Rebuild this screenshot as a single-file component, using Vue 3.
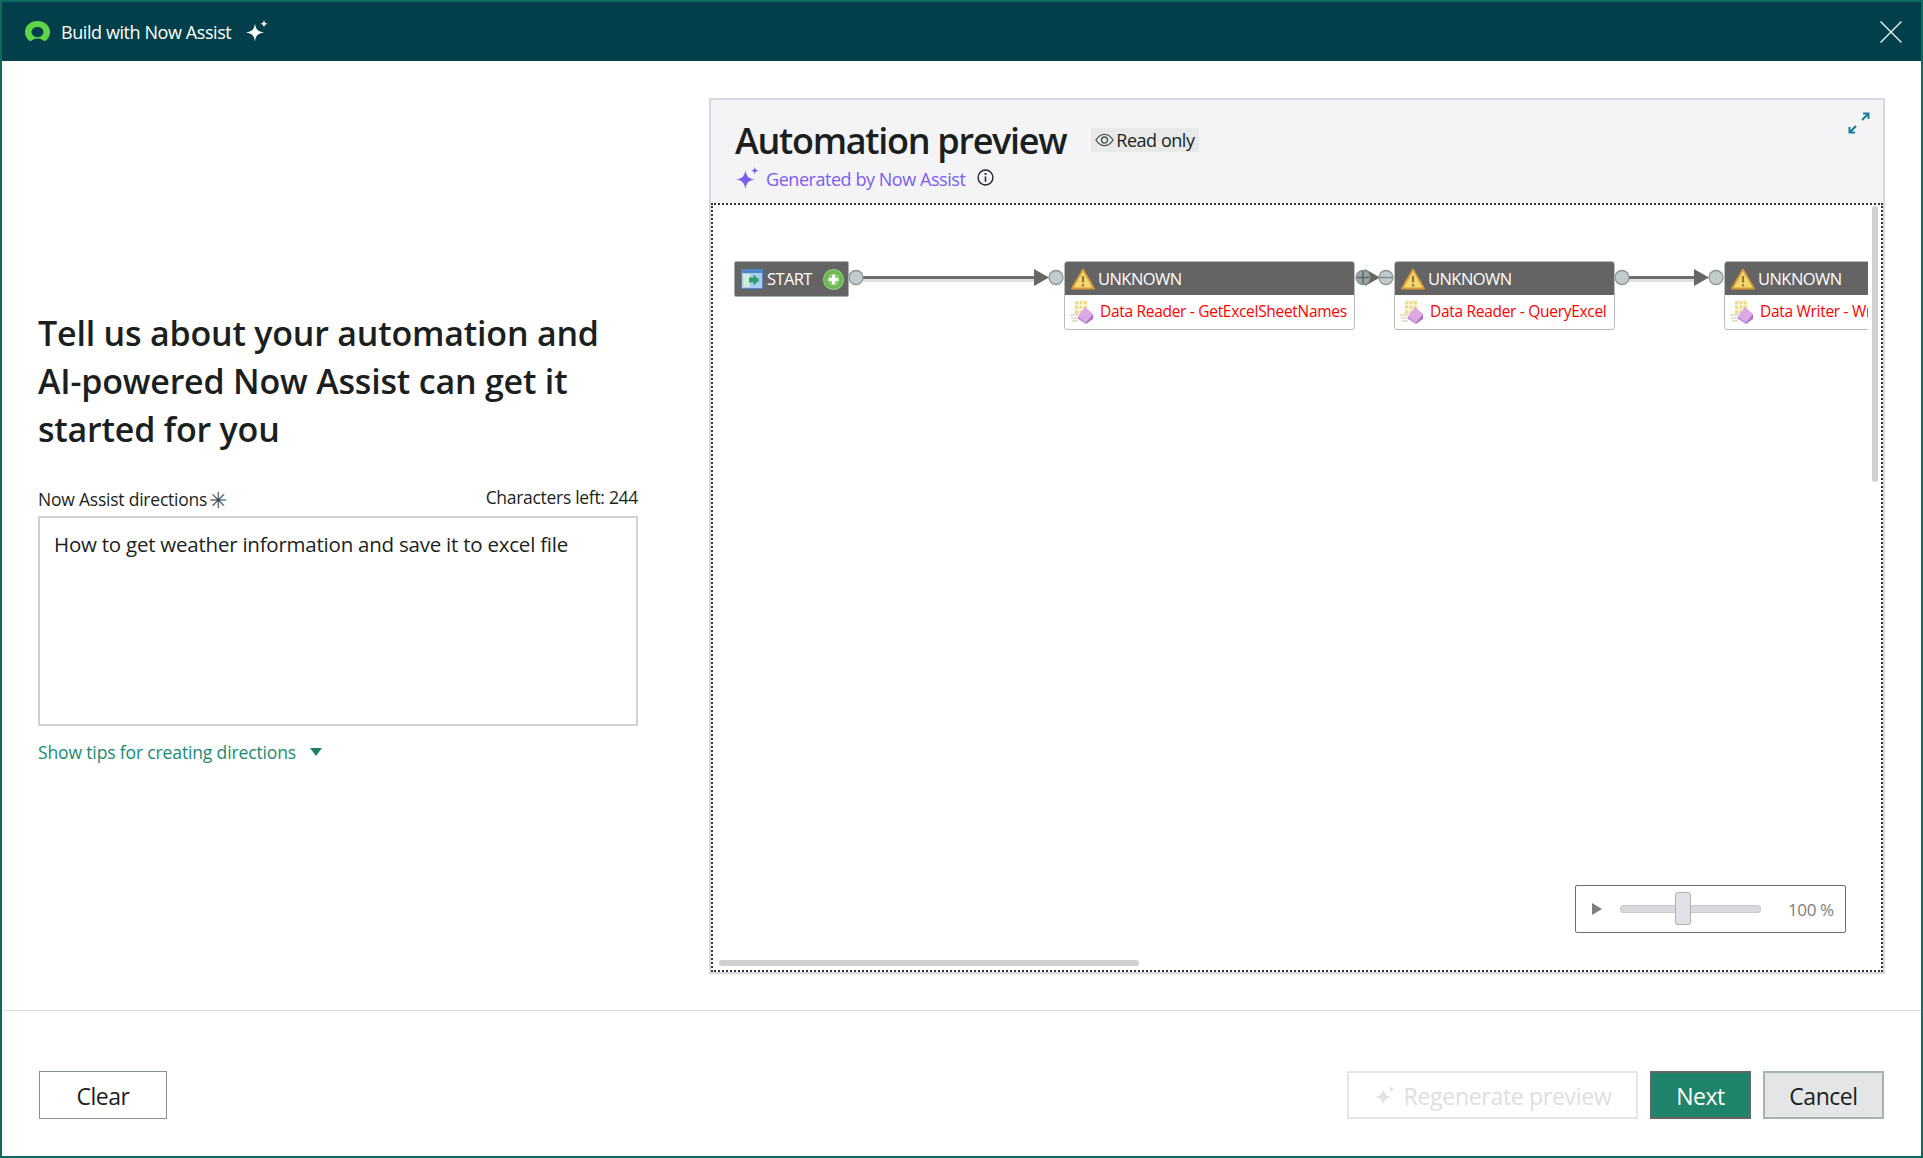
<template>
  <div class="window">
    <header class="titlebar">
      <svg class="logo" viewBox="0 0 25 21" width="25" height="21">
        <path fill="#5fd64a" fill-rule="evenodd" d="M12.500 0C19.500 0 25 4.800 25 11c0 3.200-1.300 6-3.400 8-1.100 1.100-2.500 1.200-3.700.3-1.500-1.100-3.300-1.700-5.400-1.700s-3.900.6-5.400 1.700c-1.200.9-2.600.8-3.700-.3C1.300 17 0 14.200 0 11 0 4.800 5.500 0 12.500 0zM12.500 6C9.100 6 6.500 8.100 6.500 11s2.600 5 6 5 6-2.100 6-5-2.600-5-6-5z" />
      </svg>
      <span class="app-title">Build with Now Assist</span>
      <svg class="spark" viewBox="0 0 24 24" width="24" height="24">
        <path fill="#fff" d="M10 3.500c1 6.200 2.800 8 9 9-6.200 1-8 2.800-9 9-1-6.200-2.800-8-9-9 6.200-1 8-2.800 9-9z" />
        <path fill="#fff" d="M19 0c.4 2.500 1.300 3.400 4 3.800-2.700.4-3.600 1.300-4 3.800-.4-2.500-1.300-3.400-4-3.800 2.700-.4 3.600-1.300 4-3.800z" />
      </svg>
      <svg class="close" viewBox="0 0 22 22" width="22" height="22">
        <path d="M.5.500l21 21M21.500.5l-21 21" stroke="#dfe8e8" stroke-width="1.500" fill="none" />
      </svg>
    </header>

    <main class="content">
      <section class="intro">
        <h1>Tell us about your automation and<br />AI-powered Now Assist can get it<br />started for you</h1>
        <div class="field-head">
          <label class="field-label">Now Assist directions<span class="req">✳</span></label>
          <span class="count">Characters left: 244</span>
        </div>
        <div class="textarea">How to get weather information and save it to excel file</div>
        <a class="tips">Show tips for creating directions<i class="caret"></i></a>
      </section>

      <section class="preview">
        <div class="preview-head">
          <div class="head-row">
            <h2>Automation preview</h2>
            <span class="chip">
              <svg viewBox="0 0 20 14" width="19" height="14">
                <path d="M1 7c2.500-4 5.500-6 9-6s6.500 2 9 6c-2.500 4-5.500 6-9 6s-6.500-2-9-6z" fill="none" stroke="#4b5452" stroke-width="1.400" />
                <circle cx="10" cy="7" r="3.200" fill="none" stroke="#4b5452" stroke-width="1.400" />
              </svg>
              Read only
            </span>
          </div>
          <div class="generated">
            <svg viewBox="0 0 24 24" width="25" height="25">
              <path fill="#7a5cf0" d="M10 4c1 6 3 8 9 9-6 1-8 3-9 9-1-6-3-8-9-9 6-1 8-3 9-9z" />
              <path fill="#7a5cf0" d="M19 1c.4 2.300 1.200 3.100 3.500 3.500-2.300.4-3.100 1.200-3.500 3.500-.4-2.300-1.200-3.100-3.500-3.500 2.300-.4 3.100-1.200 3.500-3.500z" />
            </svg>
            <span class="gen-text">Generated by Now Assist</span>
            <svg class="info" viewBox="0 0 16 16" width="17" height="17">
              <circle cx="8" cy="8" r="7" fill="none" stroke="#1f282a" stroke-width="1.300" />
              <path d="M8 7v5" stroke="#1f282a" stroke-width="1.500" />
              <circle cx="8" cy="4.600" r="1" fill="#1f282a" />
            </svg>
          </div>
          <svg class="expand" viewBox="0 0 24 24" width="24" height="24">
            <path d="M15 9l6-6M16 2.500h5.500V8M9 15l-6 6M2.500 16v5.500H8" fill="none" stroke="#12809a" stroke-width="2" />
          </svg>
        </div>

        <div class="canvas">
          <div class="viewport">
            <div class="diagram">
              <svg class="wires" width="1155" height="100" viewBox="0 0 1155 100">
                <g v-for="w in wires" :key="w.from">
                  <line :x1="w.from" y1="74" :x2="w.to - 12" y2="74" stroke="#000" stroke-opacity="0.12" stroke-width="6" />
                  <line :x1="w.from" y1="72.500" :x2="w.to - 12" y2="72.500" stroke="#6e6e6e" stroke-width="3" />
                  <polygon :points="`${w.to - 15},64 ${w.to},72.500 ${w.to - 15},81`" fill="#666" />
                </g>
                <circle v-for="p in ports" :key="p" :cx="p" cy="72.500" r="7" :fill="p === 650 ? '#9aa5a5' : '#c3cccc'" stroke="#8a9494" stroke-width="1.300" />
                <line x1="644" y1="72.500" x2="656" y2="72.500" stroke="#5f6868" stroke-width="1.500" />
                <line x1="650" y1="66" x2="650" y2="79" stroke="#5f6868" stroke-width="1.500" />
                <line x1="667" y1="72.500" x2="679" y2="72.500" stroke="#7f8a8a" stroke-width="1.500" />
              </svg>

              <div class="start-node">
                <svg viewBox="0 0 22 20" width="22" height="20">
                  <rect x=".5" y=".5" width="21" height="19" fill="#a9cdf0" stroke="#4f86c6" />
                  <rect x="1" y="1" width="20" height="3" fill="#4f86c6" />
                  <rect x="2.500" y="5" width="6.500" height="13" fill="#d3ecd6" />
                  <path d="M8 8.500h4.500V5.500l6 5.500-6 5.500v-3H8z" fill="#2f9e6e" />
                </svg>
                <span>START</span>
                <svg class="plus" viewBox="0 0 20 20" width="21" height="21">
                  <circle cx="10" cy="10" r="9.500" fill="#6cb653" stroke="#94d27e" />
                  <circle cx="10" cy="10" r="6" fill="#8ccb72" />
                  <path d="M10 5.500v9M5.500 10h9" stroke="#fff" stroke-width="3" />
                </svg>
              </div>

              <div v-for="n in nodes" :key="n.left" class="node" :style="{ left: n.left + 'px', width: n.width + 'px' }">
                <div class="node-head">
                  <svg viewBox="0 0 24 22" width="24" height="22">
                    <path d="M12 1.500L23 20.500H1z" fill="#f6d873" stroke="#d89a35" stroke-width="1.800" stroke-linejoin="round" />
                    <path d="M12 8v6.500" stroke="#8d7a35" stroke-width="2.200" />
                    <circle cx="12" cy="17.300" r="1.200" fill="#8d7a35" />
                  </svg>
                  <span>UNKNOWN</span>
                </div>
                <div class="node-body">
                  <svg viewBox="0 0 24 24" width="24" height="24">
                    <path d="M0 15h8M1 18h7M2 21h6" stroke="#d9dcc0" stroke-width="1.300" />
                    <rect x="5" y="1" width="12" height="13" fill="#f0dc8c" />
                    <path d="M5 5h12M5 9.500h12M9 1v13M13 1v13" stroke="#fff" stroke-width="1" />
                    <path d="M15 7l8 7-7 8-8-6z" fill="#dba9e3" />
                    <path d="M16 22l7-8v5l-7 5z" fill="#b072c6" />
                    <path d="M8 16l8 6v2l-8-5z" fill="#c58bd6" />
                  </svg>
                  <span class="node-label">{{ n.label }}</span>
                </div>
              </div>
            </div>

            <div class="zoom">
              <i class="play"></i>
              <div class="track"><div class="thumb"></div></div>
              <span class="pct">100 %</span>
            </div>

            <div class="bar-v"></div>
            <div class="bar-h"></div>
          </div>
        </div>
      </section>
    </main>

    <footer class="actions">
      <button class="btn clear">Clear</button>
      <div class="right">
        <button class="btn regen" disabled>
          <svg viewBox="0 0 24 24" width="22" height="22">
            <path fill="#e2e2e2" d="M10 4c1 6 3 8 9 9-6 1-8 3-9 9-1-6-3-8-9-9 6-1 8-3 9-9z" />
            <path fill="#e2e2e2" d="M19 1c.4 2.300 1.200 3.100 3.500 3.500-2.300.4-3.100 1.200-3.500 3.500-.4-2.300-1.200-3.100-3.500-3.500 2.300-.4 3.100-1.200 3.500-3.500z" />
          </svg>
          Regenerate preview
        </button>
        <button class="btn next">Next</button>
        <button class="btn cancel">Cancel</button>
      </div>
    </footer>
  </div>
</template>

<script setup>
const nodes = [
  { left: 351, width: 291, label: 'Data Reader - GetExcelSheetNames' },
  { left: 681, width: 221, label: 'Data Reader - QueryExcel' },
  { left: 1011, width: 290, label: 'Data Writer - WriteExcel' }
]

const ports = [143, 343, 650, 673, 909, 1003]

const wires = [
  { from: 149, to: 336 },
  { from: 656, to: 667 },
  { from: 915, to: 996 }
]
</script>

<style>
html,
body {
  margin: 0;
  background: #fff;
}
</style>

<style scoped>
.window {
  width: 1923px;
  height: 1158px;
  box-sizing: border-box;
  border: 2px solid #0b6b60;
  display: flex;
  flex-direction: column;
  font-family: "Open Sans", "Noto Sans", sans-serif;
  color: #1b1f20;
  background: #fff;
  overflow: hidden;
}

.titlebar {
  height: 59px;
  flex: none;
  background: #023f4a;
  display: flex;
  align-items: center;
  padding: 0 19px 0 23px;
  color: #fff;
}

.app-title {
  margin-left: 11px;
  font-size: 18px;
  letter-spacing: -0.42px;
}

.spark {
  margin-left: 14px;
}

.close {
  margin-left: auto;
}

.content {
  flex: 1;
  display: flex;
  min-height: 0;
  padding: 37px 36px 36px 36px;
  border-bottom: 1px solid #d8dcdc;
}

.intro {
  width: 600px;
  margin-right: 71px;
  padding-top: 211px;
}

h1 {
  margin: 0 0 32px;
  font-size: 34px;
  line-height: 48px;
  font-weight: 600;
  letter-spacing: -0.2px;
  white-space: nowrap;
}

.field-head {
  display: flex;
  justify-content: space-between;
  align-items: flex-end;
  font-size: 17.500px;
  margin-bottom: 7px;
}

.field-label {
  display: flex;
  align-items: center;
  letter-spacing: -0.22px;
  position: relative;
  top: 2px;
}

.count {
  letter-spacing: -0.3px;
}

.req {
  color: #3d4748;
  margin-left: 2px;
  font-size: 22px;
  line-height: 20px;
}

.textarea {
  height: 210px;
  box-sizing: border-box;
  border: 2px solid #cfd1d3;
  padding: 12px 14px;
  font-size: 20.500px;
  letter-spacing: -0.23px;
}

.tips {
  display: flex;
  align-items: center;
  margin-top: 14px;
  font-size: 17.500px;
  letter-spacing: -0.14px;
  color: #1a8a74;
}

.caret {
  width: 0;
  height: 0;
  margin-left: 14px;
  border: 6px solid transparent;
  border-top: 8px solid #1f7f68;
  border-bottom: 0;
}

.preview {
  flex: 1;
  display: flex;
  flex-direction: column;
  border: 2px solid #d5d8e0;
  background: #f4f4f7;
  min-width: 0;
}

.preview-head {
  position: relative;
  height: 103px;
  flex: none;
  box-sizing: border-box;
  padding: 17px 24px 0;
}

.head-row {
  display: flex;
  align-items: center;
}

h2 {
  margin: 0;
  font-size: 36px;
  line-height: 48px;
  font-weight: 600;
  letter-spacing: -1.3px;
}

.chip {
  display: flex;
  align-items: center;
  gap: 2px;
  margin-left: 25px;
  margin-top: -2px;
  padding: 0 4px;
  height: 24px;
  background: #e8e9e9;
  font-size: 18px;
  letter-spacing: -0.45px;
}

.generated {
  display: flex;
  align-items: center;
  margin-top: 1px;
  font-size: 18px;
  letter-spacing: -0.45px;
}

.gen-text {
  margin-left: 6px;
  color: #7c5cf0;
}

.info {
  margin-left: 12px;
  margin-top: -2px;
}

.expand {
  position: absolute;
  top: 11px;
  right: 12px;
}

.canvas {
  flex: 1;
  min-height: 0;
  border: 2px dotted #333;
  background: #fff;
}

.viewport {
  position: relative;
  height: 100%;
  overflow: hidden;
}

.diagram {
  position: absolute;
  top: 0;
  left: 0;
  width: 1155px;
  height: 130px;
  overflow: hidden;
}

.wires {
  position: absolute;
  top: 0;
  left: 0;
}

.start-node {
  position: absolute;
  left: 21px;
  top: 56px;
  width: 115px;
  height: 36px;
  box-sizing: border-box;
  display: flex;
  align-items: center;
  padding-left: 6px;
  background: #646464;
  border: 1px solid #a9b2b2;
  border-radius: 2px;
  color: #fff;
  font-size: 16.500px;
  letter-spacing: -0.6px;
}

.start-node span {
  margin-left: 4px;
  margin-top: -1px;
}

.plus {
  margin-left: 11px;
}

.node {
  position: absolute;
  top: 56px;
  height: 69px;
  box-sizing: border-box;
  border: 1px solid #b5bdbd;
  border-radius: 3px;
  background: #fff;
  overflow: hidden;
}

.node-head {
  height: 33px;
  display: flex;
  align-items: center;
  padding-left: 6px;
  background: #646464;
  color: #fff;
  font-size: 16.500px;
  letter-spacing: -0.55px;
}

.node-head span {
  margin-left: 3px;
  margin-top: -1px;
}

.node-body {
  height: 33px;
  display: flex;
  align-items: center;
  padding-left: 5px;
  white-space: nowrap;
}

.node-label {
  margin-left: 6px;
  margin-top: -1px;
  color: #f00;
  font-size: 15.500px;
  letter-spacing: -0.3px;
}

.zoom {
  position: absolute;
  left: 862px;
  top: 680px;
  width: 271px;
  height: 48px;
  box-sizing: border-box;
  display: flex;
  align-items: center;
  border: 1px solid #6d6d6d;
  border-radius: 2px;
  background: #fff;
  padding-left: 16px;
}

.play {
  width: 0;
  height: 0;
  border: 6.500px solid transparent;
  border-left: 10px solid #808080;
  border-right: 0;
}

.track {
  position: relative;
  width: 139px;
  height: 6px;
  margin-left: 18px;
  background: #d7d9dc;
  border: 1px solid #c6c8cc;
  border-radius: 3px;
}

.thumb {
  position: absolute;
  left: 54px;
  top: -14px;
  width: 16px;
  height: 33px;
  box-sizing: border-box;
  background: #e1e2e5;
  border: 1px solid #aeb0b5;
  border-radius: 3px;
}

.pct {
  margin-left: 27px;
  color: #7d7d7d;
  font-size: 17px;
  letter-spacing: -0.4px;
}

.bar-v {
  position: absolute;
  right: 3px;
  top: 1px;
  width: 6px;
  height: 276px;
  border-radius: 3px;
  background: #d0d0d0;
}

.bar-h {
  position: absolute;
  left: 6px;
  bottom: 4px;
  width: 420px;
  height: 6px;
  border-radius: 3px;
  background: #d0d0d0;
}

.actions {
  height: 145px;
  flex: none;
  box-sizing: border-box;
  display: flex;
  justify-content: space-between;
  padding: 60px 37px 0 37px;
}

.right {
  display: flex;
  gap: 12px;
}

.btn {
  height: 48px;
  box-sizing: border-box;
  padding-top: 3px;
  font-family: inherit;
  font-size: 23px;
  letter-spacing: -0.45px;
  background: #fff;
  color: #1b1f20;
  border: 1px solid #8a8f90;
}

.clear {
  width: 128px;
}

.regen {
  width: 291px;
  color: #dedede;
  border: 2px solid #e6e6e6;
  display: flex;
  align-items: center;
  justify-content: center;
  gap: 8px;
  letter-spacing: -0.3px;
}

.next {
  width: 101px;
  background: #1f846b;
  color: #fff;
  border: 2px solid #666;
}

.cancel {
  width: 121px;
  background: #e4e5e7;
  border: 2px solid #a8b2b2;
}
</style>
